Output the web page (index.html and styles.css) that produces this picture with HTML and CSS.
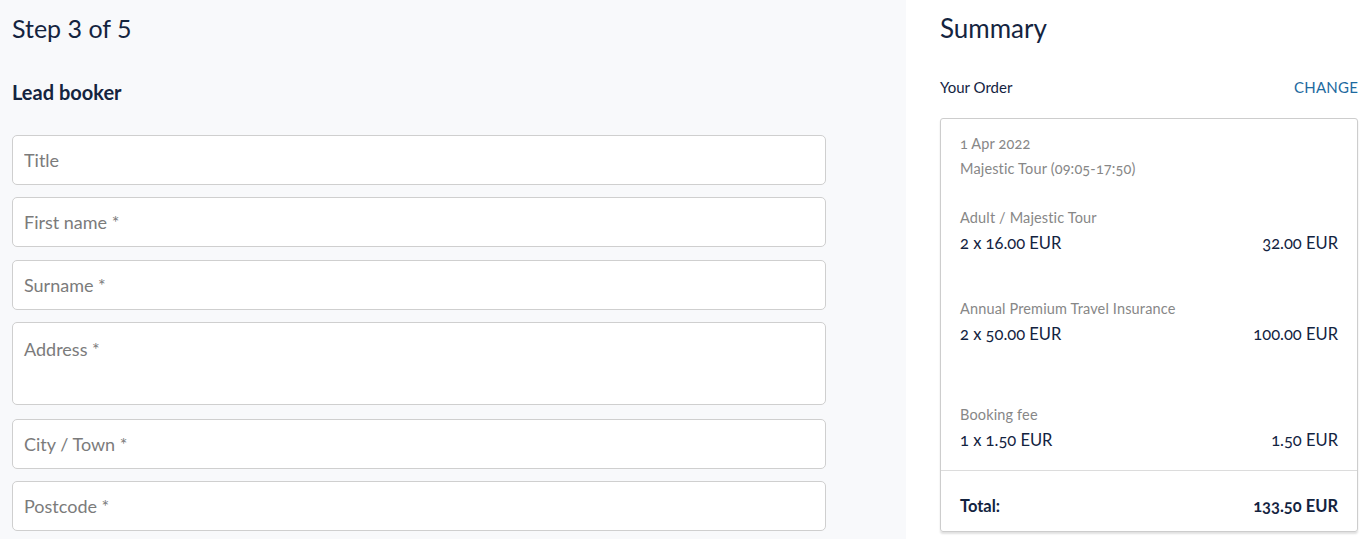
FILE: index.html
```html
<!DOCTYPE html>
<html>
<head>
<meta charset="utf-8">
<link rel="stylesheet" href="styles.css">
</head>
<body>
<div class="page">
  <main class="form-panel">
    <h1 class="step">Step 3 of 5</h1>
    <h2 class="section">Lead booker</h2>
    <div class="fields">
      <input class="field" type="text" placeholder="Title">
      <input class="field" type="text" placeholder="First name *">
      <input class="field" type="text" placeholder="Surname *">
      <textarea class="field area" placeholder="Address *"></textarea>
      <input class="field" type="text" placeholder="City / Town *">
      <input class="field" type="text" placeholder="Postcode *">
    </div>
  </main>
  <aside class="summary">
    <h1 class="summary-title">Summary</h1>
    <div class="order-head">
      <span>Your Order</span>
      <a class="change">CHANGE</a>
    </div>
    <div class="order-box">
      <div class="order-body">
        <div class="muted">1 Apr 2022</div>
        <div class="muted">Majestic Tour (09:05-17:50)</div>
        <div class="item item-first">
          <div class="muted">Adult / Majestic Tour</div>
          <div class="row"><span>2 x 16.00 EUR</span><span>32.00 EUR</span></div>
        </div>
        <div class="item item-ins">
          <div class="muted">Annual Premium Travel Insurance</div>
          <div class="row"><span>2 x 50.00 EUR</span><span>100.00 EUR</span></div>
        </div>
        <div class="item item-fee">
          <div class="muted">Booking fee</div>
          <div class="row"><span>1 x 1.50 EUR</span><span>1.50 EUR</span></div>
        </div>
      </div>
      <div class="total row"><span>Total:</span><span>133.50 EUR</span></div>
    </div>
  </aside>
</div>
</body>
</html>
```

FILE: styles.css
```css
* { box-sizing: border-box; }
html, body { margin: 0; padding: 0; }
body {
  font-family: Lato, "Open Sans", sans-serif;
  color: #13233f;
  background: #fff;
  height: 539px;
  overflow: hidden;
}
.page {
  display: grid;
  grid-template-columns: 906px 1fr;
  height: 539px;
}
.form-panel {
  background: #f8f9fb;
  padding: 12px 80px 0 12px;
}
.step {
  margin: 0;
  font-size: 25px;
  font-weight: 400;
  line-height: 32px;
  color: #14243f;
}
.section {
  margin: 36px 0 0;
  font-size: 20px;
  font-weight: 700;
  line-height: 24px;
  color: #14243f;
}
.fields {
  display: flex;
  flex-direction: column;
  gap: 12.4px;
  margin-top: 31px;
}
.field {
  display: block;
  width: 814px;
  height: 50px;
  border: 1px solid #cfcfcf;
  border-radius: 5px;
  background: #fff;
  padding: 0 11px;
  font-family: Lato, sans-serif;
  font-size: 18px;
  color: #333;
  outline: none;
}
.field::placeholder { color: #7b7b7b; opacity: 1; }
.area {
  height: 83px;
  resize: none;
  padding-top: 14px;
  line-height: 24px;
  margin-bottom: 1px;
}
.summary {
  padding: 12px 5px 0 34px;
  font-feature-settings: "onum" 1;
}
.summary-title {
  margin: 0;
  font-size: 26px;
  font-weight: 400;
  line-height: 32px;
  color: #14243f;
}
.order-head {
  display: flex;
  justify-content: space-between;
  margin-top: 33px;
  font-size: 15px;
  line-height: 20px;
}
.change { color: #1d6aa0; font-size: 15px; letter-spacing: 0.2px; }
.order-box {
  margin-top: 21px;
  border: 1px solid #cdcdcd;
  border-radius: 3px;
  box-shadow: 0 2px 2px rgba(0,0,0,0.12);
  height: 414px;
  display: flex;
  flex-direction: column;
}
.order-body {
  padding: 12px 19px 0 19px;
  height: 352px;
}
.muted {
  color: #878787;
  font-size: 14.5px;
  line-height: 25px;
  letter-spacing: 0.15px;
}
.row {
  display: flex;
  justify-content: space-between;
  font-size: 16.5px;
  line-height: 26px;
  color: #13233f;
}
.item-first { margin-top: 24px; }
.item-ins { margin-top: 40px; }
.item-fee { margin-top: 55px; }
.total {
  border-top: 1px solid #dcdcdc;
  padding: 22px 19px 0 19px;
  font-weight: 700;
  height: 61px;
}
```
